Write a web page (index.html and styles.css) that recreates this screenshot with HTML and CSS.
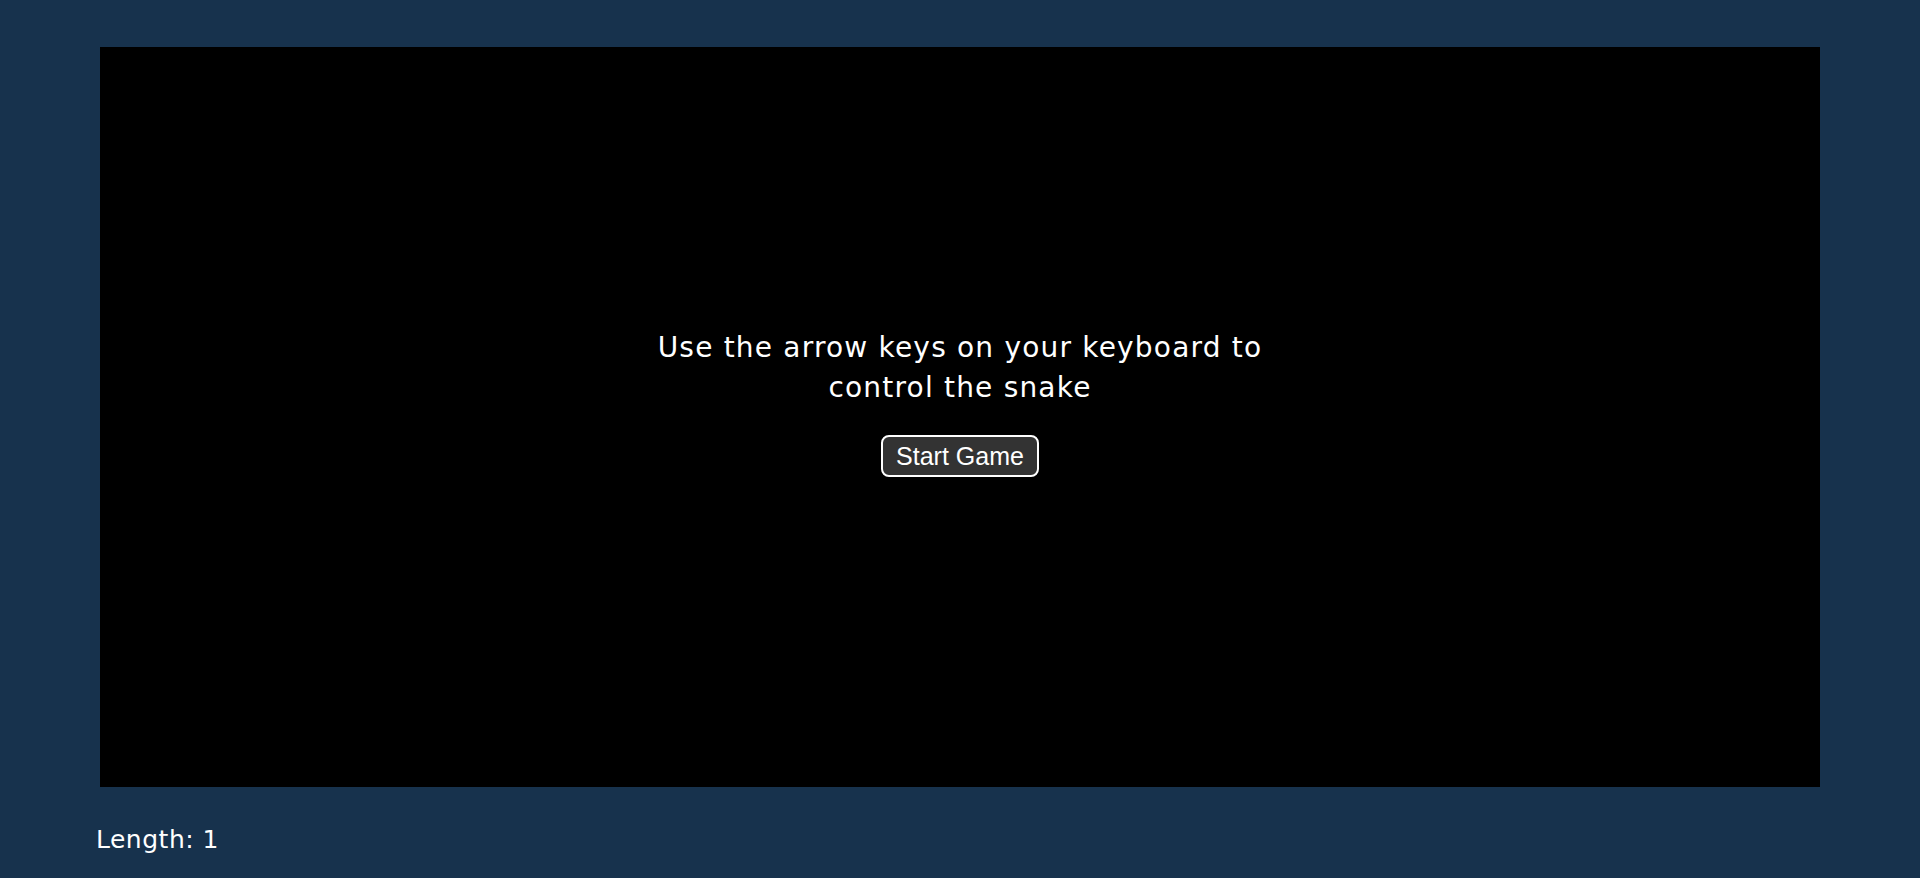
FILE: index.html
```html
<!DOCTYPE html>
<html lang="en">
<head>
<meta charset="utf-8">
<title>Snake</title>
<link rel="stylesheet" href="styles.css">
</head>
<body>
<div class="page">
  <div class="board">
    <p class="intro">Use the arrow keys on your keyboard to<br>control the snake</p>
    <button class="start">Start Game</button>
  </div>
  <div class="score">Length: 1</div>
</div>
</body>
</html>
```
FILE: styles.css
```css
html, body {
  margin: 0;
  padding: 0;
  background: #17324d;
}
.page {
  padding: 47px 100px 0;
  height: 878px;
  box-sizing: border-box;
  overflow: hidden;
}
.board {
  height: 740px;
  background: #000;
  display: flex;
  flex-direction: column;
  align-items: center;
  justify-content: center;
  padding-bottom: 29px;
  box-sizing: border-box;
}
.intro {
  margin: 0;
  color: #fff;
  font-family: "DejaVu Sans", Verdana, sans-serif;
  font-size: 28px;
  letter-spacing: 1.2px;
  line-height: 40px;
  text-align: center;
}
.start {
  margin-top: 27px;
  width: 158px;
  height: 42px;
  border: 2px solid #fff;
  border-radius: 8px;
  background: #333;
  color: #fff;
  font-family: "Liberation Sans", Arial, sans-serif;
  font-size: 25px;
  padding: 0;
  cursor: pointer;
}
.score {
  margin-top: 36px;
  padding-left: 96px;
  margin-left: -100px;
  color: #fff;
  font-family: "DejaVu Sans", Verdana, sans-serif;
  font-size: 25px;
  letter-spacing: 0.5px;
  line-height: 34px;
}
```
